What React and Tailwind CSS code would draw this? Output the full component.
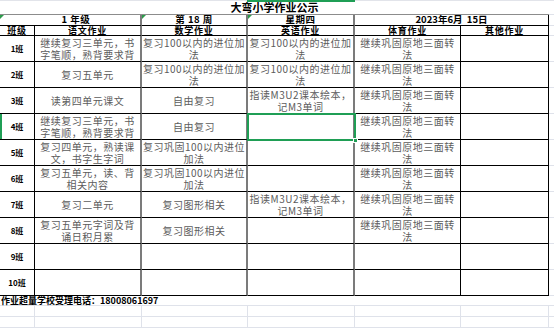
import React from "react";

const rows = [
  {
    label: "1班",
    yw: ["继续复习三单元，书", "字笔顺，熟背要求背"],
    sx: ["复习100以内的进位加", "法"],
    yy: ["复习100以内的进位加", "法"],
    ty: ["继续巩固原地三面转", "法"],
  },
  {
    label: "2班",
    yw: ["复习五单元"],
    sx: ["复习100以内的进位加", "法"],
    yy: ["复习100以内的进位加", "法"],
    ty: ["继续巩固原地三面转", "法"],
  },
  {
    label: "3班",
    yw: ["读第四单元课文"],
    sx: ["自由复习"],
    yy: ["指读M3U2课本绘本，", "记M3单词"],
    ty: ["继续巩固原地三面转", "法"],
  },
  {
    label: "4班",
    yw: ["继续复习三单元，书", "字笔顺，熟背要求背"],
    sx: ["自由复习"],
    yy: [],
    ty: ["继续巩固原地三面转", "法"],
    selected: true,
  },
  {
    label: "5班",
    yw: ["复习四单元，熟读课", "文，书字生字词"],
    sx: ["复习巩固100以内进位", "加法"],
    yy: [],
    ty: ["继续巩固原地三面转", "法"],
  },
  {
    label: "6班",
    yw: ["复习五单元，读、背", "相关内容"],
    sx: ["复习巩固100以内进位", "加法"],
    yy: [],
    ty: ["继续巩固原地三面转", "法"],
  },
  {
    label: "7班",
    yw: ["复习二单元"],
    sx: ["复习图形相关"],
    yy: ["指读M3U2课本绘本，", "记M3单词"],
    ty: ["继续巩固原地三面转", "法"],
  },
  {
    label: "8班",
    yw: ["复习五单元字词及背", "诵日积月累"],
    sx: ["复习图形相关"],
    yy: [],
    ty: ["继续巩固原地三面转", "法"],
  },
  { label: "9班", yw: [], sx: [], yy: [], ty: [] },
  { label: "10班", yw: [], sx: [], yy: [], ty: [] },
];

// little green corner flag, like excel's "number stored as text"
function Flag() {
  return (
    <span className="absolute left-0 top-0 w-0 h-0 border-t-[4px] border-r-[4px] border-t-[#2c9b4b] border-r-transparent" />
  );
}

function Text({ lines, className }) {
  return (
    <div
      className={
        "relative flex flex-col items-center text-[10px] tracking-[0.5px] text-[#5c5c5c] " +
        (lines.length > 1 ? "justify-start pt-[1px] leading-[12px] " : "justify-center leading-[14px] ") +
        className
      }
    >
      {lines.map((l, i) => (
        <span key={i} className="whitespace-nowrap">
          {l}
        </span>
      ))}
    </div>
  );
}

export default function App() {
  const gray = "border-r-2 border-b border-r-[#7b7b7b] border-b-black";
  const black = "border-r border-b border-black";
  const filler = "border-b border-[#dfe2ea]";

  return (
    <div className="w-[554px] h-[328px] overflow-hidden bg-white [font-family:'Noto_Sans_CJK_SC',sans-serif]">
      <div className="relative grid grid-cols-[35px_107px_106px_107px_106px_88px_1fr]">
        {/* title */}
        <div className="col-span-6 h-[15px] border-t border-t-[#e2e4ea] border-b border-b-[#8c8c8c] flex items-center justify-center text-[11px] font-bold leading-none text-black">
          大弯小学作业公示
        </div>
        <div className="h-[15px] border-t border-t-[#e2e4ea] border-b border-b-[#dfe2ea]" />

        {/* grade / week / day / date */}
        <div className={"relative col-span-2 h-[11px] flex items-center justify-center text-[9.5px] font-bold leading-none tracking-[0.5px] text-black pl-[12px] " + gray}>
          <Flag />1 年级
        </div>
        <div className={"relative h-[11px] flex items-center justify-center text-[9.5px] font-bold leading-none tracking-[0.5px] text-black " + gray}>
          <Flag />第 18 周
        </div>
        <div className={"relative h-[11px] flex items-center justify-center text-[9.5px] font-bold leading-none tracking-[0.5px] text-black " + gray}>
          <Flag />星期四
        </div>
        <div className={"col-span-2 h-[11px] flex items-center justify-center text-[9.5px] font-bold leading-none text-black " + black}>
          2023年6月&nbsp;&nbsp;15日
        </div>
        <div className={"h-[11px] " + filler} />

        {/* column headers */}
        {["班级", "语文作业", "数学作业", "英语作业", "体育作业", "其他作业"].map((h, i) => (
          <div
            key={h}
            className={
              "h-[10px] flex items-center justify-center text-[9px] font-bold leading-none tracking-[0.75px] text-black " +
              (i >= 1 && i <= 3 ? gray : black)
            }
          >
            {h}
          </div>
        ))}
        <div className={"h-[10px] " + filler} />

        {rows.map((r) => (
          <React.Fragment key={r.label}>
            <div className={"relative h-[26px] flex items-center justify-center text-[8px] font-bold text-black " + black}>
              {r.selected && <span className="absolute left-0 top-0 bottom-0 w-[2px] bg-[#1f9e55]" />}
              {r.label}
            </div>
            <Text lines={r.yw} className={"h-[26px] " + gray} />
            <Text lines={r.sx} className={"h-[26px] " + gray} />
            <div className="relative">
              <Text lines={r.yy} className={"h-[26px] " + gray} />
              {r.selected && (
                <div className="absolute -left-[1px] -top-[1px] -right-[1px] -bottom-[1px] border-2 border-[#1f9e55] z-10">
                  <span className="absolute -right-[4px] -bottom-[4px] w-[5px] h-[5px] bg-[#1f9e55] border border-white" />
                </div>
              )}
            </div>
            <Text lines={r.ty} className={"h-[26px] " + black} />
            <div className={"h-[26px] " + black} />
            <div className={"h-[26px] " + filler} />
          </React.Fragment>
        ))}

        {/* footer note */}
        <div className={"col-span-7 h-[10px] flex items-center pl-[1px] text-[9px] font-bold leading-none text-black whitespace-nowrap " + filler}>
          作业超量学校受理电话：18008061697
        </div>

        {[11, 11].map((h, k) =>
          [0, 1, 2, 3, 4, 5, 6].map((i) => (
            <div
              key={k + "-" + i}
              className={
                "h-[11px] border-b border-[#dfe2ea] " + (i < 6 ? "border-r" : "")
              }
            />
          ))
        )}

        {/* selected column marker */}
        <span className="absolute left-[247px] top-0 w-[108px] h-[2px] bg-[#1f9e55]" />
      </div>
    </div>
  );
}
